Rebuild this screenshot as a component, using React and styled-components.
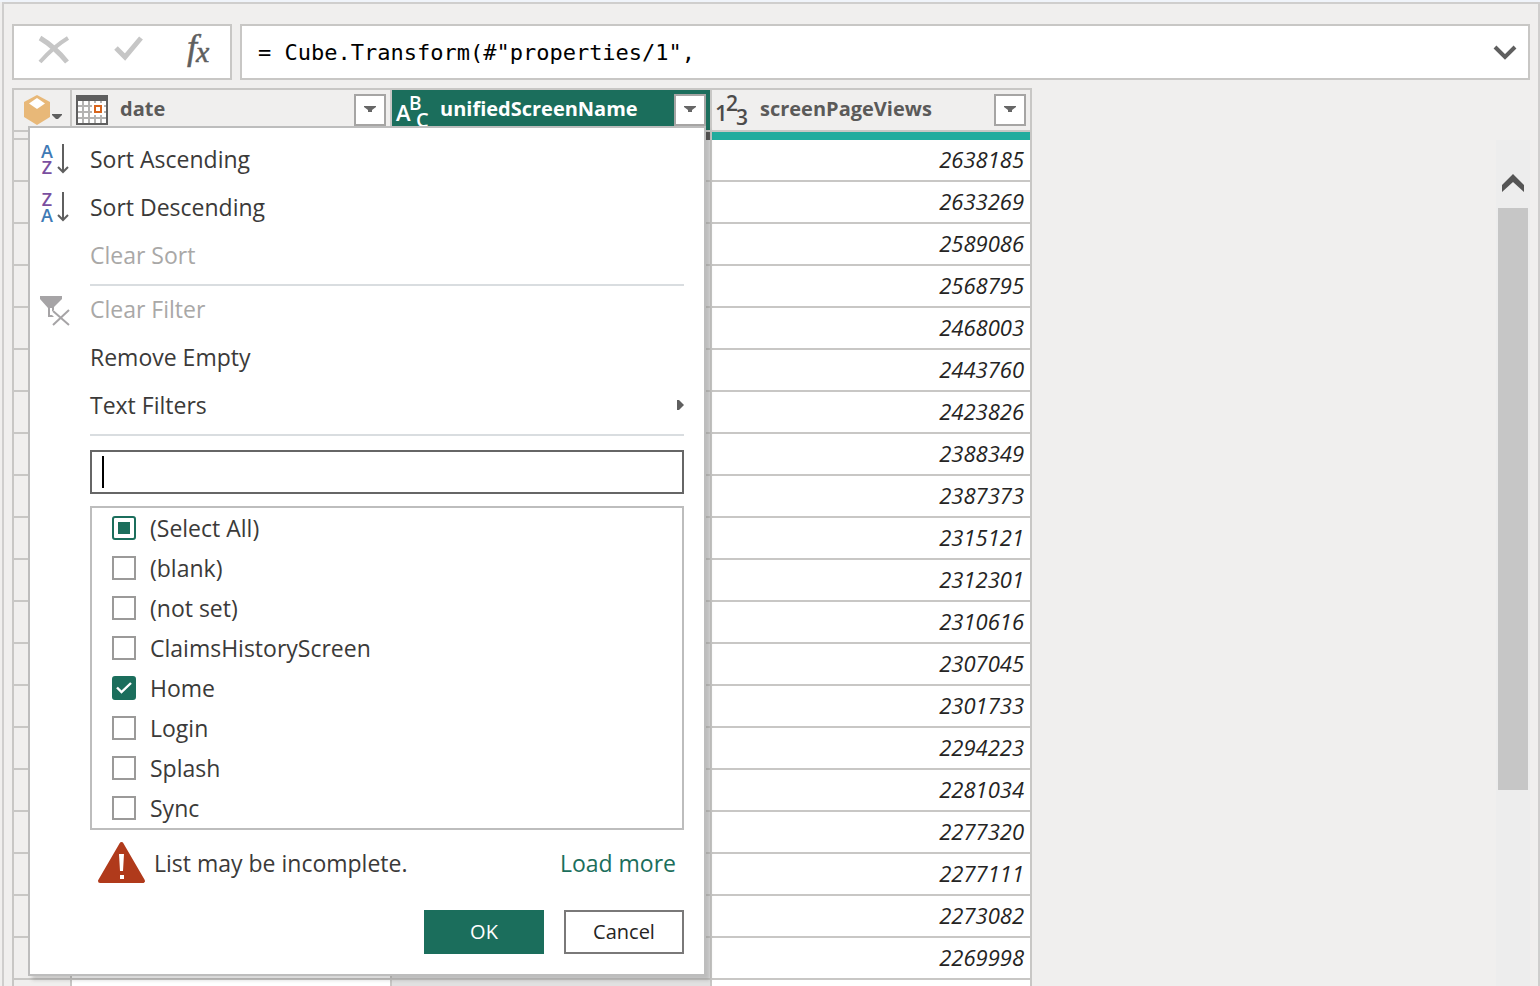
import React, { useEffect, useRef } from "react";
import styled, { createGlobalStyle } from "styled-components";

const GlobalStyle = createGlobalStyle`
  *, *::before, *::after { box-sizing: border-box; }
  body {
    margin: 0;
    background: #f0efee;
    color: #3b3a39;
    font-family: "Open Sans", "Noto Sans", sans-serif;
    font-size: 23px;
    line-height: 32px;
  }
  button, input { font: inherit; color: inherit; margin: 0; }
  svg { overflow: visible; flex: none; }
`;

const line = "#c8c7c5";
const green = "#1b6e5c";

const Editor = styled.main`
  display: flex;
  flex-direction: column;
  height: 100vh;
  overflow: hidden;
  border-top: 2px solid #f0f4fa;
`;

const Frame = styled.div`
  display: flex;
  flex-direction: column;
  flex: 1;
  min-height: 0;
  gap: 8px;
  margin-left: 2px;
  padding: 20px 8px 0;
  border: 2px solid #cfcecd;
  border-bottom: 0;
`;

const FormulaBar = styled.div`
  display: flex;
  gap: 8px;
  height: 56px;
  flex: none;
`;

const FormulaTools = styled.div`
  display: flex;
  align-items: center;
  justify-content: space-between;
  width: 220px;
  padding: 0 6px 4px 12px;
  background: #fff;
  border: 2px solid ${line};
`;

const ToolButton = styled.button`
  display: flex;
  align-items: center;
  justify-content: center;
  width: 56px;
  height: 40px;
  padding: 0;
  border: 0;
  background: none;
`;

const FormulaField = styled.div`
  display: flex;
  flex: 1;
  align-items: center;
  padding: 2px 7px 0 0;
  background: #fff;
  border: 2px solid ${line};
`;

const FormulaInput = styled.input`
  flex: 1;
  min-width: 0;
  padding: 0 16px;
  border: 0;
  outline: 0;
  background: none;
  color: #000;
  font-family: "DejaVu Sans Mono", monospace;
  font-size: 22px;
`;

const ExpandButton = styled(ToolButton)`
  width: 32px;
`;

const Workspace = styled.div`
  position: relative;
  display: flex;
  flex: 1;
  min-height: 0;
  justify-content: space-between;
`;

const Table = styled.table`
  width: 1020px;
  height: max-content;
  table-layout: fixed;
  border-collapse: separate;
  border-spacing: 0;
  border-top: 2px solid ${line};
  border-left: 2px solid ${line};
`;

const HeadCell = styled.th`
  height: 42px;
  padding: 0;
  border-right: 2px solid ${line};
  border-bottom: 2px solid ${line};
  background: ${(p) => (p.$active ? green : "#f0efee")};
  color: ${(p) => (p.$active ? "#fff" : "#5b5a59")};
  font-weight: 700;
  text-align: left;
`;

const HeadContent = styled.div`
  display: flex;
  align-items: center;
  gap: 12px;
  padding: 0 4px;
`;

const HeadLabel = styled.span`
  flex: 1;
  padding-bottom: 2px;
  font-size: 20px;
`;

const FilterButton = styled.button`
  display: flex;
  align-items: center;
  justify-content: center;
  width: 32px;
  height: 32px;
  padding: 0;
  border: 2px solid #a6a5a4;
  background: #fff;
`;

const CornerButton = styled.button`
  display: flex;
  align-items: flex-end;
  gap: 1px;
  width: 56px;
  height: 40px;
  padding: 0 0 5px 9px;
  border: 0;
  background: none;
`;

const QualityCell = styled.td`
  height: 8px;
  padding: 0;
  border-right: 2px solid ${line};
  background: ${(p) => p.$fill};
`;

const QualityStub = styled.td`
  height: 8px;
  padding: 0;
  border-right: 2px solid ${line};
  border-bottom: 2px solid ${line};
`;

const Cell = styled.td`
  height: 42px;
  padding: 0 6px 2px;
  border-right: 2px solid ${line};
  border-bottom: 2px solid ${line};
  background: ${(p) => (p.$selected ? "#e1e1e1" : "#fff")};
  color: #252423;
  font-size: 22px;
  font-style: italic;
  text-align: right;
`;

const RowNumber = styled.td`
  height: 42px;
  padding: 0;
  border-right: 2px solid ${line};
  border-bottom: 2px solid ${line};
`;

const ScrollTrack = styled.div`
  display: flex;
  flex-direction: column;
  align-items: center;
  width: 34px;
  margin-top: 52px;
  padding: 28px 2px 0;
  background: #ededed;
`;

const ScrollUp = styled.button`
  display: flex;
  justify-content: center;
  width: 100%;
  height: 40px;
  padding: 5px 0 0;
  border: 0;
  background: none;
`;

const ScrollThumb = styled.div`
  width: 100%;
  height: 582px;
  background: #c6c6c6;
`;

const Menu = styled.section`
  position: absolute;
  top: 38px;
  left: 16px;
  width: 678px;
  padding: 8px 20px 20px 0;
  border: 2px solid #bdbdbd;
  background: #fff;
  box-shadow: 4px 4px 4px rgba(0, 0, 0, 0.16);
`;

const MenuItem = styled.button`
  display: grid;
  grid-template-columns: 60px 1fr auto;
  align-items: center;
  width: 100%;
  height: 48px;
  padding: 0 0 2px;
  border: 0;
  background: none;
  color: #3b3a39;
  text-align: left;
  &:disabled { color: #a9a8a7; }
`;

const IconSlot = styled.span`
  display: flex;
  padding: 2px 0 0 10px;
`;

const Divider = styled.hr`
  height: 2px;
  margin: 4px 0 0 60px;
  border: 0;
  background: #d9dde0;
`;

const MenuBody = styled.form`
  display: flex;
  flex-direction: column;
  margin: 14px 0 0 60px;
`;

const SearchInput = styled.input`
  height: 44px;
  padding: 0 10px;
  border: 2px solid #666;
  border-radius: 0;
  outline: 0;
  background: #fff;
`;

const SearchBox = styled.div`
  position: relative;
  display: grid;
`;

const Caret = styled.span`
  position: absolute;
  top: 6px;
  left: 12px;
  width: 2px;
  height: 32px;
  background: #000;
`;

const ValueList = styled.ul`
  margin: 12px 0 0;
  padding: 0 0 0 20px;
  border: 2px solid #bdbdbd;
  list-style: none;
`;

const ValueLabel = styled.label`
  display: flex;
  align-items: center;
  gap: 14px;
  height: 40px;
`;

const CheckBox = styled.input`
  appearance: none;
  width: 24px;
  height: 24px;
  border: 2px solid #9b9a99;
  background: #fff;
  &:checked {
    border-color: ${green};
    border-radius: 3px;
    background: ${green} url("data:image/svg+xml,%3Csvg xmlns='http://www.w3.org/2000/svg' viewBox='0 0 20 20'%3E%3Cpath d='M3 9.500l4.500 4.500L17 5' fill='none' stroke='white' stroke-width='2.400'/%3E%3C/svg%3E") center / 20px 20px no-repeat;
  }
  &:indeterminate {
    border-color: ${green};
    border-radius: 3px;
    background: linear-gradient(${green}, ${green}) center / 12px 12px no-repeat;
  }
`;

const Notice = styled.div`
  display: flex;
  align-items: center;
  height: 68px;
  gap: 8px;
  padding: 0 8px 2px;
`;

const NoticeText = styled.span`
  flex: 1;
`;

const LoadMore = styled.a`
  color: ${green};
  text-decoration: none;
`;

const Actions = styled.div`
  display: flex;
  justify-content: flex-end;
  gap: 20px;
  margin-top: 12px;
`;

const ActionButton = styled.button`
  width: 120px;
  height: 44px;
  padding: 0;
  border: 2px solid ${(p) => (p.$primary ? green : "#7a7979")};
  background: ${(p) => (p.$primary ? green : "#fff")};
  color: ${(p) => (p.$primary ? "#fff" : "#252423")};
  font-size: 20px;
  line-height: 28px;
`;

const IconText = styled.text`
  font-family: "Open Sans", "Noto Sans", sans-serif;
  font-weight: ${(p) => p.$weight || 600};
`;

const FxText = styled.text`
  font-family: "Liberation Serif", serif;
  font-style: italic;
`;

const CancelIcon = () => (
  <svg width="32" height="30" viewBox="0 0 32 30" fill="none" stroke="#c6c6c6">
    <path d="M2 3C12 9 20 16 29 27" strokeWidth="5" />
    <path d="M30 3C20 9 10 18 2 27" strokeWidth="4" />
  </svg>
);

const CommitIcon = () => (
  <svg width="38" height="28" viewBox="0 0 38 28" fill="none" stroke="#c6c6c6" strokeWidth="5">
    <path d="M10 12L19 21L35 2" />
  </svg>
);

const FxIcon = () => (
  <svg width="28" height="36" viewBox="0 0 28 36" fill="#5f5f5f" stroke="#5f5f5f" strokeWidth="0.5">
    <FxText x="5" y="27" fontSize="36">f</FxText>
    <FxText x="14" y="30" fontSize="30">x</FxText>
  </svg>
);

const ChevronDown = () => (
  <svg width="24" height="16" viewBox="0 0 24 16" fill="none" stroke="#5f5f5f" strokeWidth="4">
    <path d="M2 2L12 12L22 2" />
  </svg>
);

const ChevronUp = () => (
  <svg width="24" height="20" viewBox="0 0 24 20" fill="#555">
    <path d="M12 1L23 12V19L12 9L1 19V12Z" />
  </svg>
);

const CubeIcon = () => (
  <svg width="28" height="30" viewBox="0 0 28 30">
    <path d="M14 0L27 7V22L14 30L1 22V7Z" fill="#e8b878" />
    <path d="M14 3L22 8.500L14 14L6 8.500Z" fill="#fff" />
  </svg>
);

const CornerArrow = () => (
  <svg width="10" height="12" viewBox="0 0 10 12" fill="#5f5f5f">
    <path d="M0 1H10V2L6 6H4L0 2Z" />
  </svg>
);

const SmallArrow = () => (
  <svg width="12" height="8" viewBox="0 0 12 8" fill="#666">
    <path d="M0 0H12V1L8 4V6H4V4L0 1Z" />
  </svg>
);

const CalendarIcon = () => (
  <svg width="32" height="30" viewBox="0 0 32 30">
    <path d="M0 0H32V30H0Z" fill="#5f5f5f" />
    <path d="M2 6H30V28H2Z" fill="#fff" />
    <path d="M7 6V28M13 6V28M19 6V28M25 6V28M2 11H30M2 17H30M2 23H30" stroke="#b4b3b2" strokeWidth="2" />
    <path d="M16 8H28V20H16Z" fill="#fff" />
    <path d="M19 11H25V17H19Z" fill="#fff" stroke="#d8651d" strokeWidth="2" />
  </svg>
);

const TextTypeIcon = () => (
  <svg width="32" height="34" viewBox="0 0 32 34" fill="#fff">
    <IconText x="0" y="28" fontSize="22">A</IconText>
    <IconText x="13" y="17" fontSize="19">B</IconText>
    <IconText x="20" y="34" fontSize="20">C</IconText>
  </svg>
);

const NumberTypeIcon = () => (
  <svg width="32" height="34" viewBox="0 0 32 34" fill="#4c4b4a">
    <IconText x="-1" y="28" fontSize="22">1</IconText>
    <IconText x="10" y="18" fontSize="21">2</IconText>
    <IconText x="20" y="32" fontSize="21">3</IconText>
  </svg>
);

const SortIcon = ({ top, bottom }) => {
  const tint = { A: "#3f7ab5", Z: "#7a4fa0" };
  return (
    <svg width="32" height="34" viewBox="0 0 32 34">
      <IconText x="7" y="15" fontSize="18" textAnchor="middle" fill={tint[top]}>{top}</IconText>
      <IconText x="7" y="31" fontSize="18" textAnchor="middle" fill={tint[bottom]}>{bottom}</IconText>
      <path d="M23 1V29M18 24L23 29L28 24" fill="none" stroke="#5f5f5f" strokeWidth="2" />
    </svg>
  );
};

const ClearFilterIcon = () => (
  <svg width="32" height="32" viewBox="0 0 32 32">
    <path d="M0 2H22V5L14 13V17H12V21L14 23H8V14L0 5Z" fill="#a6a4a6" />
    <path d="M10 14H12V21H10Z" fill="#fff" />
    <path d="M13 17L29 31M29 16L13 31" stroke="#fff" strokeWidth="5" />
    <path d="M13 17L29 31M29 16L13 31" stroke="#a6a4a6" strokeWidth="2" />
  </svg>
);

const SubmenuArrow = () => (
  <svg width="7" height="12" viewBox="0 0 7 12" fill="#5f5f5f">
    <path d="M0 1H2L7 6L2 11H0Z" />
  </svg>
);

const WarningIcon = () => (
  <svg width="48" height="42" viewBox="0 0 48 42">
    <path d="M23.500 2L45 39H2Z" fill="#b03a1b" stroke="#b03a1b" strokeWidth="4" strokeLinejoin="round" />
    <path d="M21 12H26L25 29H22ZM22 33H26V37H22Z" fill="#fff" />
  </svg>
);

const views = [
  2638185, 2633269, 2589086, 2568795, 2468003, 2443760, 2423826, 2388349,
  2387373, 2315121, 2312301, 2310616, 2307045, 2301733, 2294223, 2281034,
  2277320, 2277111, 2273082, 2269998, "",
];

const values = [
  "(blank)", "(not set)", "ClaimsHistoryScreen", "Home", "Login", "Splash", "Sync",
];

function ColumnHead({ icon, name, active }) {
  return (
    <HeadCell $active={active} scope="col">
      <HeadContent>
        {icon}
        <HeadLabel>{name}</HeadLabel>
        <FilterButton aria-label={`Filter ${name}`}><SmallArrow /></FilterButton>
      </HeadContent>
    </HeadCell>
  );
}

function FilterMenu() {
  const selectAll = useRef(null);
  useEffect(() => {
    selectAll.current.indeterminate = true;
  }, []);
  return (
    <Menu aria-label="Filter unifiedScreenName">
      <MenuItem>
        <IconSlot><SortIcon top="A" bottom="Z" /></IconSlot>Sort Ascending
      </MenuItem>
      <MenuItem>
        <IconSlot><SortIcon top="Z" bottom="A" /></IconSlot>Sort Descending
      </MenuItem>
      <MenuItem disabled><IconSlot />Clear Sort</MenuItem>
      <Divider />
      <MenuItem disabled>
        <IconSlot><ClearFilterIcon /></IconSlot>Clear Filter
      </MenuItem>
      <MenuItem><IconSlot />Remove Empty</MenuItem>
      <MenuItem><IconSlot />Text Filters<SubmenuArrow /></MenuItem>
      <Divider />
      <MenuBody onSubmit={(e) => e.preventDefault()}>
        <SearchBox>
          <SearchInput aria-label="Search values" />
          <Caret />
        </SearchBox>
        <ValueList>
          <li>
            <ValueLabel><CheckBox type="checkbox" ref={selectAll} />(Select All)</ValueLabel>
          </li>
          {values.map((v) => (
            <li key={v}>
              <ValueLabel><CheckBox type="checkbox" defaultChecked={v === "Home"} />{v}</ValueLabel>
            </li>
          ))}
        </ValueList>
        <Notice>
          <WarningIcon />
          <NoticeText>List may be incomplete.</NoticeText>
          <LoadMore href="#more">Load more</LoadMore>
        </Notice>
        <Actions>
          <ActionButton $primary type="submit">OK</ActionButton>
          <ActionButton type="button">Cancel</ActionButton>
        </Actions>
      </MenuBody>
    </Menu>
  );
}

export default function App() {
  return (
    <Editor>
      <GlobalStyle />
      <Frame>
        <FormulaBar>
          <FormulaTools>
            <ToolButton aria-label="Cancel edit"><CancelIcon /></ToolButton>
            <ToolButton aria-label="Commit edit"><CommitIcon /></ToolButton>
            <ToolButton aria-label="Insert step"><FxIcon /></ToolButton>
          </FormulaTools>
          <FormulaField>
            <FormulaInput aria-label="Formula" defaultValue={'= Cube.Transform(#"properties/1",'} />
            <ExpandButton aria-label="Expand formula"><ChevronDown /></ExpandButton>
          </FormulaField>
        </FormulaBar>
        <Workspace>
          <Table>
            <colgroup>
              <col width="58" />
              <col width="320" />
              <col width="320" />
              <col width="320" />
            </colgroup>
            <thead>
              <tr>
                <HeadCell scope="col">
                  <CornerButton aria-label="Table options"><CubeIcon /><CornerArrow /></CornerButton>
                </HeadCell>
                <ColumnHead icon={<CalendarIcon />} name="date" />
                <ColumnHead icon={<TextTypeIcon />} name="unifiedScreenName" active />
                <ColumnHead icon={<NumberTypeIcon />} name="screenPageViews" />
              </tr>
            </thead>
            <tbody>
              <tr>
                <QualityStub />
                <QualityCell $fill="#22ac9e" />
                <QualityCell $fill="#5c5b5a" />
                <QualityCell $fill="#22ac9e" />
              </tr>
              {views.map((v, i) => (
                <tr key={i}>
                  <RowNumber />
                  <Cell />
                  <Cell $selected />
                  <Cell>{v}</Cell>
                </tr>
              ))}
            </tbody>
          </Table>
          <ScrollTrack>
            <ScrollUp aria-label="Scroll up"><ChevronUp /></ScrollUp>
            <ScrollThumb />
          </ScrollTrack>
          <FilterMenu />
        </Workspace>
      </Frame>
    </Editor>
  );
}
